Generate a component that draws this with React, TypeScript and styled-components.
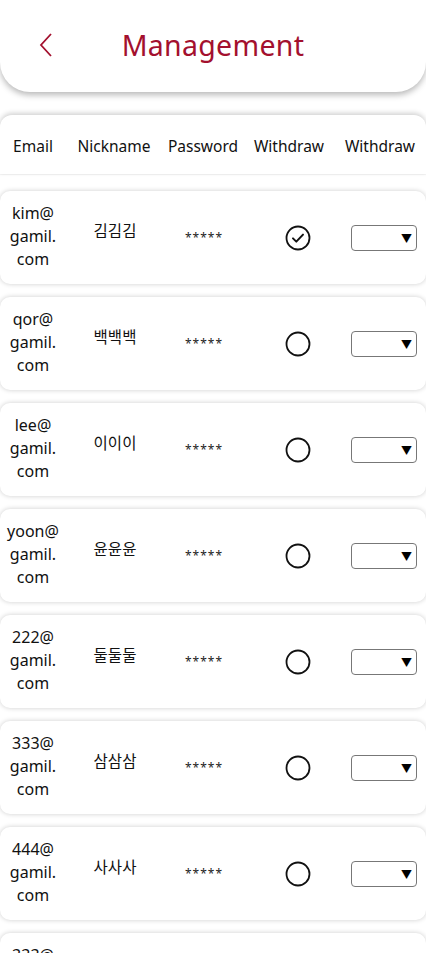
import React from "react";
import styled, { createGlobalStyle } from "styled-components";

const Global = createGlobalStyle`
  * { box-sizing: border-box; }
  body {
    margin: 0;
    background: #ffffff;
    font-family: "Noto Sans", "Noto Sans CJK KR", sans-serif;
    color: #111;
  }
`;

const Page = styled.div`
  width: 426px;
  display: flex;
  flex-direction: column;
  padding-bottom: 20px;
`;

const Header = styled.header`
  height: 92px;
  background: #fff;
  border-radius: 0 0 30px 30px;
  box-shadow: 0 3px 6px rgba(0, 0, 0, 0.28);
  display: grid;
  grid-template-columns: 66px 1fr 66px;
  align-items: center;
  padding-bottom: 2px;
  position: relative;
  z-index: 2;
`;

const BackButton = styled.button`
  border: none;
  background: none;
  padding: 0;
  width: 66px;
  height: 40px;
  display: flex;
  align-items: center;
  justify-content: center;
  padding-left: 26px;
  cursor: pointer;
`;

const Title = styled.h1`
  margin: 0;
  text-align: center;
  font-size: 28.5px;
  font-weight: 400;
  color: #a3102e;
  letter-spacing: 0.3px;
`;

const TableHead = styled.div`
  margin-top: 23px;
  height: 59px;
  background: #fff;
  border-radius: 12px 12px 0 0;
  box-shadow: 0 -2px 5px rgba(0, 0, 0, 0.18), 0 1px 1px rgba(0, 0, 0, 0.05);
  display: grid;
  grid-template-columns: 66px 96px 82px 90px 92px;
  align-items: center;
  padding-top: 3px;
`;

const HeadCell = styled.div`
  text-align: center;
  font-size: 15.5px;
  color: #111;
  white-space: nowrap;
`;

const Rows = styled.div`
  margin-top: 17px;
  display: flex;
  flex-direction: column;
  gap: 13px;
`;

const Row = styled.div`
  min-height: 93px;
  background: #fff;
  border-radius: 10px;
  box-shadow: 0 0 5px rgba(0, 0, 0, 0.2);
  display: grid;
  grid-template-columns: 66px 96px 82px 104px 78px;
  align-items: center;
  padding: 11px 0;
`;

const EmailCell = styled.div`
  text-align: center;
  font-size: 16px;
  line-height: 23px;
  margin-top: -2px;
`;

const Line = styled.span`
  display: block;
`;

const NickCell = styled.div`
  text-align: center;
  font-size: 15.5px;
  margin-top: -14px;
  margin-left: 2px;
`;

const PassCell = styled.div`
  text-align: center;
  font-size: 12px;
  letter-spacing: 1px;
  color: #222;
  padding-left: 2px;
`;

const CheckCell = styled.div`
  display: flex;
  justify-content: center;
  padding-left: 4px;
`;

const SelectCell = styled.div`
  display: flex;
  justify-content: flex-start;
  padding-left: 3px;
`;

const SelectBox = styled.div`
  width: 66px;
  height: 26px;
  border: 1px solid #777;
  border-radius: 4px;
  display: flex;
  align-items: center;
  justify-content: flex-end;
  padding-right: 4px;
  font-size: 11px;
  color: #000;
  background: #fff;
`;

type Member = { email: string; nick: string; checked?: boolean };

const members: Member[] = [
  { email: "kim@gamil.com", nick: "김김김", checked: true },
  { email: "qor@gamil.com", nick: "백백백" },
  { email: "lee@gamil.com", nick: "이이이" },
  { email: "yoon@gamil.com", nick: "윤윤윤" },
  { email: "222@gamil.com", nick: "둘둘둘" },
  { email: "333@gamil.com", nick: "삼삼삼" },
  { email: "444@gamil.com", nick: "사사사" },
  { email: "333@gamil.com", nick: "삼삼삼" },
];

function splitEmail(email: string): string[] {
  const [user, domain] = email.split("@");
  const dot = domain.indexOf(".");
  return [user + "@", domain.slice(0, dot + 1), domain.slice(dot + 1)];
}

const CheckIcon = ({ checked }: { checked?: boolean }) => (
  <svg width="26" height="26" viewBox="0 0 26 26" fill="none">
    <circle cx="13" cy="13" r="11.5" stroke="#111" strokeWidth="1.8" />
    {checked && (
      <path
        d="M8 13.4 L11.3 16.6 L18 9.6"
        stroke="#111"
        strokeWidth="2"
        strokeLinecap="round"
        strokeLinejoin="round"
      />
    )}
  </svg>
);

export default function App() {
  return (
    <>
      <Global />
      <Page>
        <Header>
          <BackButton aria-label="back">
            <svg width="14" height="26" viewBox="0 0 14 26" fill="none">
              <path d="M12 2 L2 13 L12 24" stroke="#a3102e" strokeWidth="1.8" strokeLinejoin="miter" />
            </svg>
          </BackButton>
          <Title>Management</Title>
          <div />
        </Header>
        <TableHead>
          <HeadCell>Email</HeadCell>
          <HeadCell>Nickname</HeadCell>
          <HeadCell>Password</HeadCell>
          <HeadCell>Withdraw</HeadCell>
          <HeadCell>Withdraw</HeadCell>
        </TableHead>
        <Rows>
          {members.map((m, i) => (
            <Row key={i}>
              <EmailCell>
                {splitEmail(m.email).map((l, j) => (
                  <Line key={j}>{l}</Line>
                ))}
              </EmailCell>
              <NickCell>{m.nick}</NickCell>
              <PassCell>*****</PassCell>
              <CheckCell>
                <CheckIcon checked={m.checked} />
              </CheckCell>
              <SelectCell>
                <SelectBox>▼</SelectBox>
              </SelectCell>
            </Row>
          ))}
        </Rows>
      </Page>
    </>
  );
}
